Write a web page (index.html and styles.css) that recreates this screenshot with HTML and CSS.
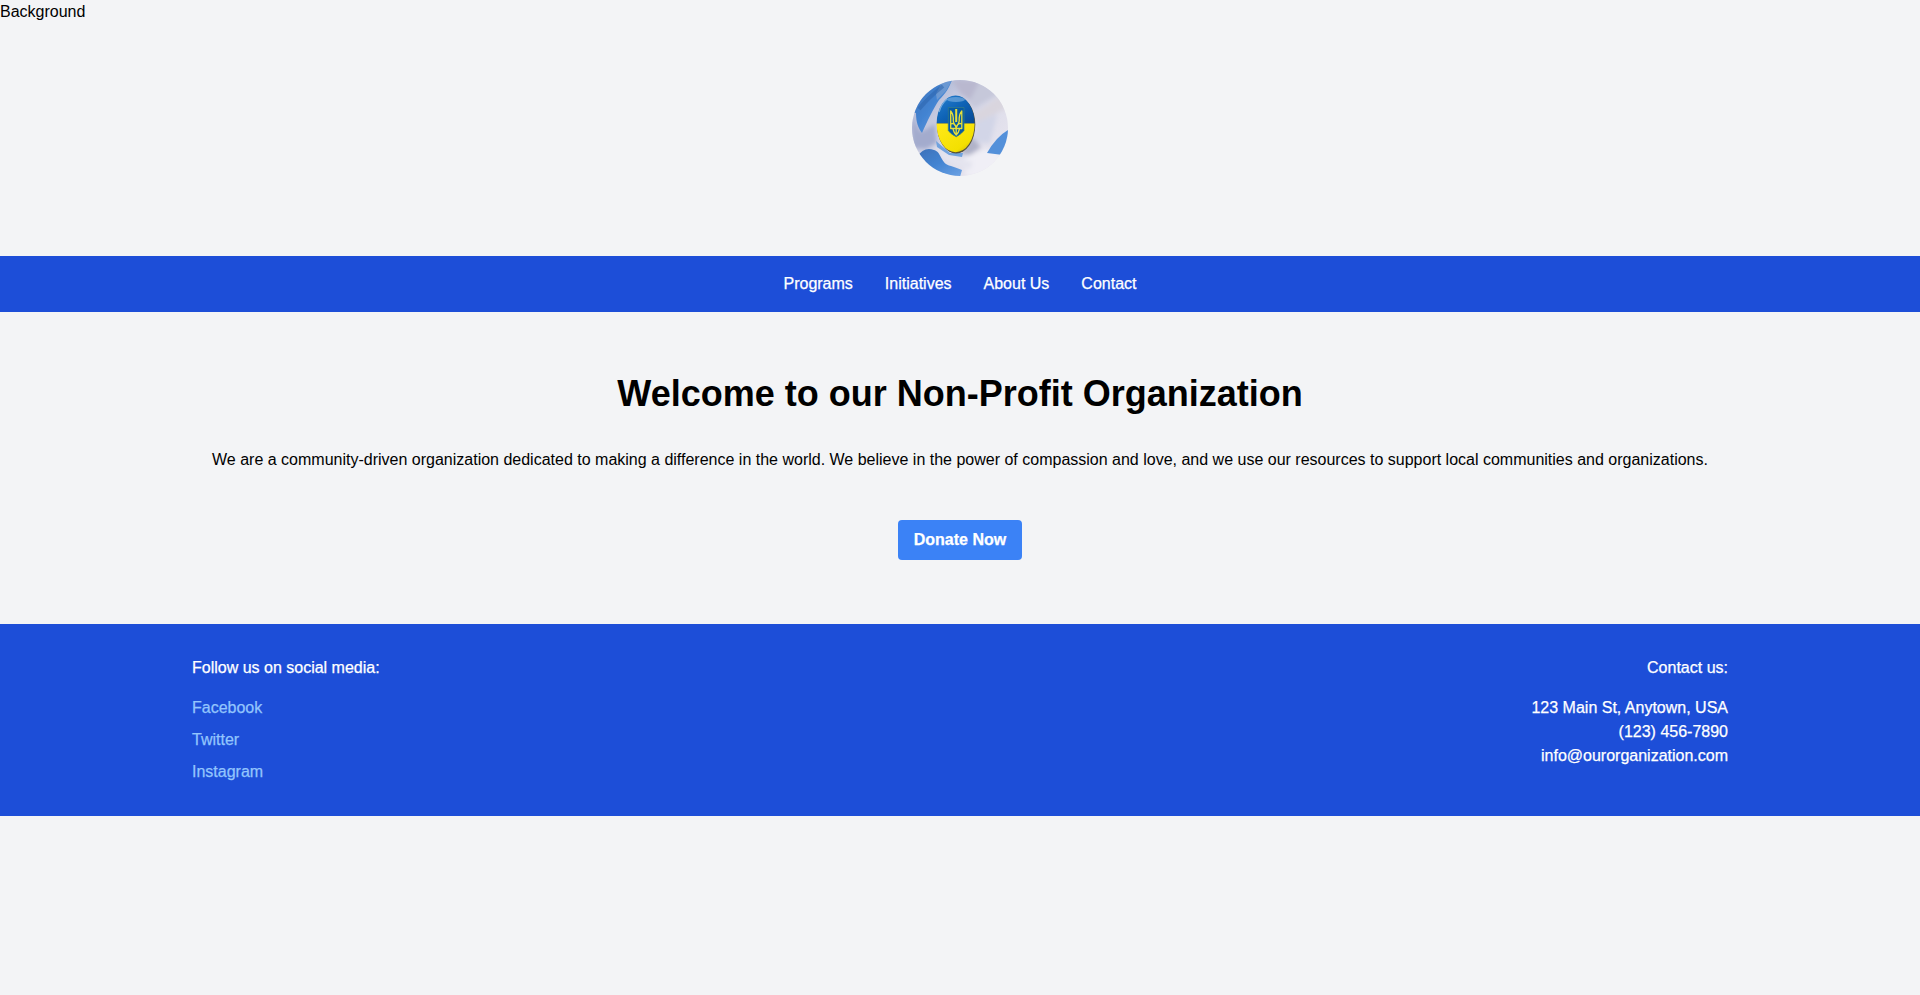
FILE: index.html
```html
<!DOCTYPE html>
<html lang="en">
<head>
<meta charset="utf-8">
<title>Non-Profit Organization</title>
<link rel="stylesheet" href="styles.css">
</head>
<body>
<header class="header">
  <div class="header-label">Background</div>
  <svg class="logo" viewBox="0 0 96 96" role="img" aria-label="Emblem pin on blue and white fabric">
    <defs>
      <linearGradient id="cloth" x1="0" y1="0" x2="1" y2="1">
        <stop offset="0" stop-color="#9aa9cf"/><stop offset=".3" stop-color="#c5c9df"/>
        <stop offset=".6" stop-color="#dedeeb"/><stop offset="1" stop-color="#eee9f0"/>
      </linearGradient>
      <linearGradient id="blueFold" x1="0" y1="0" x2="1" y2="1">
        <stop offset="0" stop-color="#3c70b8"/><stop offset=".5" stop-color="#4384d2"/><stop offset="1" stop-color="#6ea3e4"/>
      </linearGradient>
      <linearGradient id="pinBlue" x1="0" y1="0" x2="1" y2="1">
        <stop offset="0" stop-color="#2b83d2"/><stop offset=".5" stop-color="#0e63b6"/><stop offset="1" stop-color="#064690"/>
      </linearGradient>
      <linearGradient id="pinYellow" x1="0" y1="0" x2="1" y2="1">
        <stop offset="0" stop-color="#ffe91a"/><stop offset=".7" stop-color="#f3e000"/><stop offset="1" stop-color="#b89b08"/>
      </linearGradient>
      <filter id="soft" x="-20%" y="-20%" width="140%" height="140%"><feGaussianBlur stdDeviation="2"/></filter>
      <filter id="edge"><feGaussianBlur stdDeviation=".5"/></filter>
      <clipPath id="circle"><circle cx="48" cy="48" r="48"/></clipPath>
      <clipPath id="pin"><ellipse cx="43.6" cy="43.8" rx="19" ry="28.4"/></clipPath>
    </defs>
    <g clip-path="url(#circle)">
      <rect width="96" height="96" fill="url(#cloth)"/>
      <g filter="url(#soft)">
        <path d="M40 0L68 0L73 12L60 22L48 13Z" fill="#b9b8cf"/>
        <path d="M96 10L61 35L65 43L96 27Z" fill="#d9d5de"/>
        <path d="M68 0L90 12L62 28L57 22Z" fill="#c6c8da"/>
        <path d="M0 38L9 52L23 44L25 63L14 69L0 68Z" fill="#a3abcd"/>
        <path d="M65 42L85 34L78 63L61 62Z" fill="#d2d5e7"/>
        <path d="M59 56L69 67L58 75L48 74Z" fill="#b0b2c8"/>
        <path d="M52 78L73 69L96 76V96H54Z" fill="#f0eff6"/>
        <path d="M22 65L42 77L61 82L58 90L30 79Z" fill="#e4e4ef"/>
      </g>
      <g filter="url(#edge)">
        <path d="M0 0H40C37 8 34 13 27 20C21 29 15 42 10 53C6 48 4 42 4 33L0 32Z" fill="url(#blueFold)"/>
        <path d="M31 0H40L34 11L25 20L24 14Z" fill="#6b98d2"/>
        <path d="M7 29Q17 17 31 6" fill="none" stroke="#2860a9" stroke-width="4" opacity=".5"/>
        <path d="M5 77Q12 66 22 70C30 72 28 84 39 86Q45 88 50 90L48 97H15Z" fill="url(#blueFold)"/>
        <path d="M96 50Q84 57 75 73L91 75L96 66Z" fill="#5390da"/>
        <path d="M24 61L38 73L51 73L50 77L37 75L25 67Z" fill="#6fa2de"/>
        <ellipse cx="44.1" cy="44.8" rx="19.2" ry="28.6" fill="#57523c"/>
      </g>
      <g clip-path="url(#pin)">
        <rect x="23" y="14" width="42" height="29.5" fill="url(#pinBlue)"/>
        <rect x="23" y="43.5" width="42" height="30" fill="url(#pinYellow)"/>
        <ellipse cx="44" cy="19.5" rx="9" ry="2.4" fill="#8cbbe6" opacity=".55" filter="url(#edge)"/>
        <path d="M27 32Q29 24 35 19" fill="none" stroke="#89b9e5" stroke-width="1.5" opacity=".8"/>
      </g>
      <path d="M36.3 27.5H52V50.5Q50 53.5 44.2 56.8Q38 53.5 36.3 50.5Z" fill="#075aa3" stroke="#357e88" stroke-width=".7"/>
      <g fill="none" stroke="#e7df39" stroke-width="1.3" stroke-linejoin="round">
        <path d="M38.7 31V48.5H49.8V31Q46.7 35 47.2 41Q47 44 44.2 47Q41.4 44 41.3 41Q41.8 35 38.7 31Z"/>
        <path d="M44.2 29V42" stroke-width="2"/>
        <path d="M38.7 44Q43 42 44.2 48Q45.5 42 49.8 44M41 49Q42 53 44.2 55Q46.5 53 47.5 49M44.2 46V55"/>
      </g>
    </g>
  </svg>
</header>
<nav class="nav">
  <a href="#">Programs</a>
  <a href="#">Initiatives</a>
  <a href="#">About Us</a>
  <a href="#">Contact</a>
</nav>
<main class="main">
  <h1 class="title">Welcome to our Non-Profit Organization</h1>
  <p class="intro">We are a community-driven organization dedicated to making a difference in the world. We believe in the power of compassion and love, and we use our resources to support local communities and organizations.</p>
  <a class="donate" href="#">Donate Now</a>
</main>
<footer class="footer">
  <div class="footer-inner">
    <div class="social">
      <p class="footer-title">Follow us on social media:</p>
      <ul class="social-list">
        <li><a class="social-link" href="#">Facebook</a></li>
        <li><a class="social-link" href="#">Twitter</a></li>
        <li><a class="social-link" href="#">Instagram</a></li>
      </ul>
    </div>
    <div class="contact">
      <p class="footer-title">Contact us:</p>
      <p>123 Main St, Anytown, USA</p>
      <p>(123) 456-7890</p>
      <p>info@ourorganization.com</p>
    </div>
  </div>
</footer>
</body>
</html>
```
FILE: styles.css
```css
* { box-sizing: border-box; margin: 0; padding: 0; }
body {
  background: #f3f4f6;
  color: #000;
  font: 16px/24px "Liberation Sans", Arial, sans-serif;
}
a { color: inherit; text-decoration: none; }
.header { height: 256px; display: flex; flex-direction: column; }
.header-label { height: 24px; }
.logo { display: block; width: 96px; height: 96px; margin: 56px auto 0; }
.nav {
  display: flex;
  justify-content: center;
  gap: 32px;
  padding: 16px 0;
  background: #1d4ed8;
  color: #fff;
  -webkit-text-stroke: 0.25px;
}
.main {
  display: flex;
  flex-direction: column;
  align-items: center;
  height: 312px;
  padding-top: 62px;
  text-align: center;
}
.title { font-size: 36px; line-height: 40px; font-weight: 700; margin-bottom: 34px; }
.intro { margin-bottom: 48px; }
.donate {
  padding: 8px 16px;
  border-radius: 4px;
  background: #3b82f6;
  color: #fff;
  font-weight: 700;
  -webkit-text-stroke: 0.25px;
}
.footer { background: #1d4ed8; color: #fff; padding: 32px 0; -webkit-text-stroke: 0.25px; }
.footer-inner { width: 1536px; margin: 0 auto; display: flex; justify-content: space-between; }
.footer-title { margin-bottom: 16px; }
.social-list { list-style: none; display: flex; flex-direction: column; gap: 8px; }
.social-link { color: #93c5fd; }
.contact { text-align: right; }
```
